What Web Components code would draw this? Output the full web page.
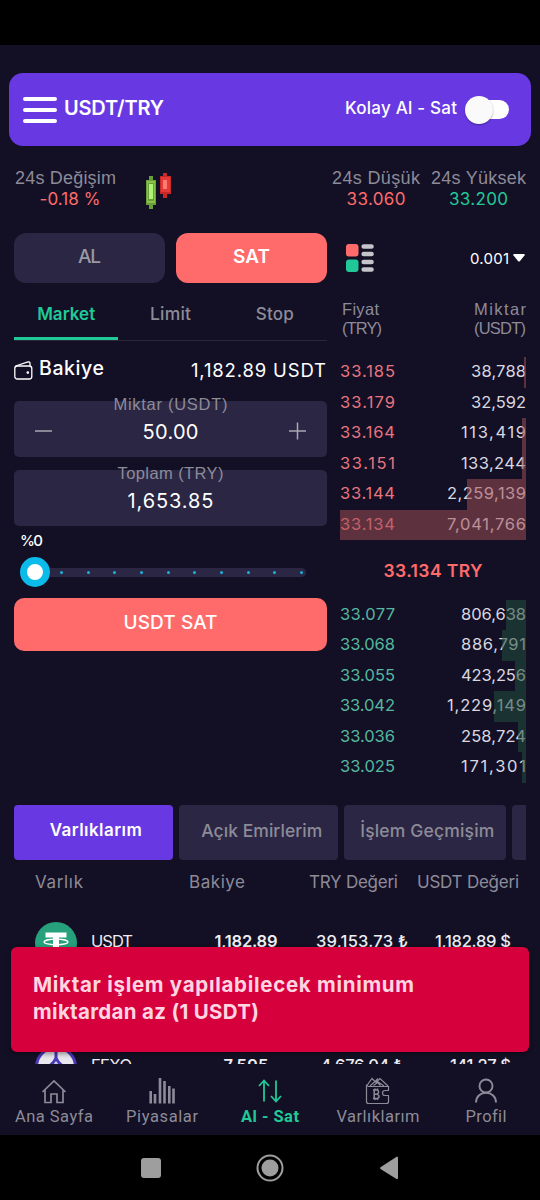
<!DOCTYPE html>
<html lang="tr">
<head>
<meta charset="utf-8">
<title>USDT/TRY</title>
<style>
  body {
    margin: 0;
    background: #000;
  }
</style>
</head>
<body>
<trade-app></trade-app>

<script>
// one line of text that is tracked out to the width given in "w"
class TextLabel extends HTMLElement {
  constructor() {
    super();
    this.attachShadow({ mode: 'open' });
  }
  connectedCallback() {
    const size = this.getAttribute('size') || 17;
    const weight = this.getAttribute('weight') || 400;
    this.shadowRoot.innerHTML = `
    <style>
    :host {
      display: block;
      flex: none;
      white-space: nowrap;
      font-size: ${size}px;
      font-weight: ${weight};
      line-height: 1;
    }
    :host([face="grotesk"]) { font-family: "Liberation Sans", Arial, sans-serif; }
    :host([face="nav"]) { font-family: Roboto, sans-serif; }
    span { display: inline-block; }
    </style>
    <span><slot></slot></span>
    `;
    this.fit();
  }
  fit() {
    const width = Number(this.getAttribute('w'));
    if (!width) return;
    const span = this.shadowRoot.querySelector('span');
    const natural = span.getBoundingClientRect().width;
    const gaps = this.textContent.length - 1;
    span.style.letterSpacing = `${(width - natural) / gaps}px`;
    this.style.width = `${width}px`;
  }
}
customElements.define('text-label', TextLabel);

class BaseElement extends HTMLElement {
  constructor() {
    super();
    this.attachShadow({ mode: 'open' });
  }
  connectedCallback() {
    const template = document.createElement('template');
    template.innerHTML = `<style>${this.getStyles()}</style>${this.getTemplate()}`;
    this.shadowRoot.appendChild(template.content.cloneNode(true));
  }
}

class AppHeader extends BaseElement {
  getTemplate() {
    return `
    <svg width="34" height="28" viewBox="0 0 34 28" stroke="#fff" stroke-width="4" stroke-linecap="round">
      <path d="M2 3h30M2 14h30M2 25h30"/>
    </svg>
    <text-label class="pair" size="20" weight="600" w="100">USDT/TRY</text-label>
    <text-label size="17" weight="500" w="112">Kolay Al - Sat</text-label>
    <div class="switch"><i></i></div>
    `;
  }
  getStyles() {
    return `
    :host {
      display: flex;
      align-items: center;
      height: 73px;
      margin: 0 9px;
      padding: 0 22px 0 14px;
      box-sizing: border-box;
      border-radius: 14px;
      background: #6839e3;
      color: #fff;
    }
    .pair { margin: 0 auto 3px 7px; }
    text-label { margin-bottom: 3px; }
    .switch {
      display: flex;
      align-items: center;
      width: 40px;
      height: 19px;
      margin-left: 12px;
      border-radius: 10px;
      background: #fff;
    }
    i {
      width: 28px;
      height: 28px;
      margin-left: -4px;
      border-radius: 50%;
      background: #fafafa;
      box-shadow: 0 1px 2px rgba(0, 0, 0, .35);
    }
    `;
  }
}
customElements.define('app-header', AppHeader);

class TickerStats extends BaseElement {
  getTemplate() {
    return `
    <div class="stat change">
      <text-label face="grotesk" size="18" w="101">24s Değişim</text-label>
      <text-label class="down" size="17" w="61">-0.18 %</text-label>
    </div>
    <svg width="28" height="38" viewBox="0 0 28 38" shape-rendering="crispEdges">
      <path fill="#689f38" d="M4 4h4v33H4zM1 8h10v25H1z"/>
      <path fill="#8bc34a" d="M2 9h8v22H2z"/>
      <path fill="#689f38" d="M3 11h6v18H3z"/>
      <path fill="#aef47a" d="M4 12h4v15H4z"/>
      <path fill="#c62828" d="M18 1h4v25h-4zM15 4h11v18H15z"/>
      <path fill="#e53935" d="M16 5h9v15h-9z"/>
      <path fill="#ff7b72" d="M18 8h4v9h-4z"/>
    </svg>
    <div class="stat">
      <text-label face="grotesk" size="18" w="88">24s Düşük</text-label>
      <text-label class="down" size="17" w="59">33.060</text-label>
    </div>
    <div class="stat">
      <text-label face="grotesk" size="18" w="95">24s Yüksek</text-label>
      <text-label class="up" size="17" w="59">33.200</text-label>
    </div>
    `;
  }
  getStyles() {
    return `
    :host {
      display: flex;
      gap: 11px;
      height: 64px;
      margin: 23px 14px 0 15px;
      color: #8d8b98;
    }
    .stat {
      display: flex;
      flex-direction: column;
      align-items: center;
      gap: 4px;
    }
    .change { width: 101px; }
    .change .down { margin-left: 9px; }
    svg { margin: 3px auto 0 18px; }
    .down { color: #ff6b6b; }
    .up { color: #20c997; }
    `;
  }
}
customElements.define('ticker-stats', TickerStats);

// input box whose caption sits across the top edge
class AmountField extends BaseElement {
  getTemplate() {
    return `
    <div class="caption"><slot name="caption"></slot></div>
    <div class="row">
      <slot name="before"></slot>
      <div class="value"><slot></slot></div>
      <slot name="after"></slot>
    </div>
    `;
  }
  getStyles() {
    return `
    :host {
      display: block;
      height: 56px;
      border-radius: 5px;
      background: #2a2643;
      color: #fff;
    }
    .caption {
      display: flex;
      justify-content: center;
      height: 16px;
      margin-top: -6px;
      padding-top: 1px;
      box-sizing: border-box;
      color: #8d8b98;
    }
    .row {
      display: flex;
      align-items: center;
      height: 40px;
      padding: 0 20px;
    }
    .value {
      display: flex;
      flex: 1;
      justify-content: center;
      padding-top: 1px;
    }
    `;
  }
}
customElements.define('amount-field', AmountField);

class PercentSlider extends BaseElement {
  getTemplate() {
    return `
    <div class="thumb"></div>
    <div class="track">${'<i></i>'.repeat(10)}</div>
    `;
  }
  getStyles() {
    return `
    :host {
      display: flex;
      align-items: center;
      height: 30px;
    }
    .thumb {
      flex: none;
      width: 16px;
      height: 16px;
      border: 7px solid #0bbbe9;
      border-radius: 50%;
      background: #fff;
    }
    .track {
      display: flex;
      align-items: center;
      justify-content: space-between;
      width: 256px;
      height: 9px;
      padding: 0 3px 0 10px;
      box-sizing: border-box;
      border-radius: 0 5px 5px 0;
      background: #2a2643;
    }
    i {
      width: 3px;
      height: 3px;
      border-radius: 50%;
      background: #19b2dc;
    }
    `;
  }
}
customElements.define('percent-slider', PercentSlider);

class OrderForm extends BaseElement {
  getTemplate() {
    return `
    <div class="sides">
      <div class="side"><text-label size="19" weight="500" w="23">AL</text-label></div>
      <div class="side sell"><text-label size="19" weight="600" w="37">SAT</text-label></div>
    </div>
    <div class="types">
      <div class="active"><text-label size="17" weight="600" w="58">Market</text-label></div>
      <div><text-label size="17.500" weight="500" w="41">Limit</text-label></div>
      <div><text-label size="17" weight="500" w="38">Stop</text-label></div>
    </div>
    <div class="balance">
      <svg width="19" height="19" viewBox="0 0 19 19" fill="none" stroke="#fff" stroke-width="1.3">
        <rect x=".8" y="5" width="17" height="13" rx="2.5"/>
        <path d="M1.5 5 14 1q2-.5 2 1.500V5"/>
        <circle cx="13.800" cy="11.600" r=".7" fill="#fff"/>
      </svg>
      <text-label class="name" size="19.500" weight="500" w="65">Bakiye</text-label>
      <text-label class="sum" size="18.500" w="135">1,182.89 USDT</text-label>
    </div>
    <amount-field>
      <text-label slot="caption" face="grotesk" size="16.500" w="114">Miktar (USDT)</text-label>
      <svg slot="before" width="18" height="18" viewBox="0 0 18 18" stroke="#a9a8b4" stroke-width="1.500"><path d="M1 9h17"/></svg>
      <text-label size="20" w="56">50.00</text-label>
      <svg slot="after" width="18" height="18" viewBox="0 0 18 18" stroke="#a9a8b4" stroke-width="1.500"><path d="M0 9h17M8.500 .5v17"/></svg>
    </amount-field>
    <amount-field>
      <text-label slot="caption" face="grotesk" size="16.500" w="106">Toplam (TRY)</text-label>
      <text-label size="20" w="86">1,653.85</text-label>
    </amount-field>
    <text-label class="percent" size="15" weight="500" w="23">%0</text-label>
    <percent-slider></percent-slider>
    <div class="submit"><text-label size="19" weight="500" w="94">USDT SAT</text-label></div>
    `;
  }
  getStyles() {
    return `
    :host {
      display: flex;
      flex-direction: column;
      width: 313px;
      color: #fff;
    }
    .sides {
      display: flex;
      gap: 11px;
    }
    .side {
      display: flex;
      flex: 1;
      align-items: center;
      justify-content: center;
      height: 50px;
      padding-bottom: 3px;
      box-sizing: border-box;
      border-radius: 12px;
      background: #2a2643;
      color: #9b99a3;
    }
    .sell {
      background: #ff6b6b;
      color: #fff;
    }
    .types {
      display: flex;
      height: 58px;
      box-sizing: border-box;
      border-bottom: 1px solid #2a2838;
      color: #8d8b98;
    }
    .types div {
      display: flex;
      flex: 1;
      align-items: center;
      justify-content: center;
      padding-top: 5px;
    }
    .types .active {
      padding-top: 8px;
      border-bottom: 3px solid #20c997;
      color: #20c997;
    }
    .balance {
      display: flex;
      align-items: center;
      height: 60px;
      padding-bottom: 1px;
      box-sizing: border-box;
    }
    .balance .name { margin: 0 auto 4px 6px; }
    .balance .sum { margin-right: 1px; }
    amount-field + amount-field { margin-top: 13px; }
    .percent { margin: 7px 0 9px 6px; }
    percent-slider { margin-left: 6px; }
    .submit {
      display: flex;
      align-items: center;
      justify-content: center;
      height: 53px;
      margin-top: 11px;
      padding-bottom: 4px;
      box-sizing: border-box;
      border-radius: 10px;
      background: #ff6b6b;
    }
    `;
  }
}
customElements.define('order-form', OrderForm);

class BookRow extends BaseElement {
  getTemplate() {
    return `
    <div class="texts">
      <text-label size="16.500" w="55">${this.getAttribute('price')}</text-label>
      <text-label class="amount" size="16.500" w="${this.getAttribute('w')}">${this.getAttribute('amount')}</text-label>
    </div>
    <div class="depth"></div>
    `;
  }
  getStyles() {
    return `
    :host {
      display: grid;
      height: 30.5px;
      color: #e7757f;
      --depth: rgba(160, 80, 85, .53);
    }
    :host([side="buy"]) {
      color: #55b79f;
      --depth: rgba(33, 78, 60, .55);
    }
    .texts {
      display: flex;
      grid-area: 1 / 1;
      align-items: center;
      justify-content: space-between;
      padding-bottom: 2px;
    }
    .amount { color: #d9d8e0; }
    .depth {
      grid-area: 1 / 1;
      justify-self: end;
      z-index: 1;
      width: ${this.getAttribute('depth')}px;
      background: var(--depth);
    }
    `;
  }
}
customElements.define('book-row', BookRow);

class OrderBook extends BaseElement {
  getTemplate() {
    const asks = [
      ['33.185', '38,788', 55, 2],
      ['33.179', '32,592', 55, 0],
      ['33.164', '113,419', 65, 4],
      ['33.151', '133,244', 65, 4],
      ['33.144', '2,259,139', 79, 59.5],
      ['33.134', '7,041,766', 79, 186]
    ];
    const bids = [
      ['33.077', '806,638', 65, 20.5],
      ['33.068', '886,791', 65, 24.5],
      ['33.055', '423,256', 65, 11.5],
      ['33.042', '1,229,149', 79, 32],
      ['33.036', '258,724', 65, 8],
      ['33.025', '171,301', 65, 4]
    ];
    const row = (side) => ([price, amount, w, depth]) =>
      `<book-row side="${side}" price="${price}" amount="${amount}" w="${w}" depth="${depth}"></book-row>`;
    return `
    <div class="tools">
      <svg width="28" height="28" viewBox="0 0 28 28">
        <rect width="12.500" height="12.500" rx="3" fill="#ff6b6b"/>
        <rect y="15.500" width="12.500" height="12.500" rx="3" fill="#20c997"/>
        <path stroke="#c6c4cb" stroke-width="4.600" stroke-linecap="round" d="M17.700 2.500h7.800M17.700 10h7.800M17.700 18h7.800M17.700 25.500h7.800"/>
      </svg>
      <text-label size="15" w="39">0.001</text-label>
      <svg class="caret" width="12" height="8" viewBox="0 0 12 8"><path fill="#fff" d="M1 0h10q1.200 .4.5 1.500L7 7q-1 1-2 0L.5 1.500Q-.2.4 1 0z"/></svg>
    </div>
    <div class="heads">
      <div>
        <text-label face="grotesk" size="16.500" w="37">Fiyat</text-label>
        <text-label face="grotesk" size="16.500" w="40">(TRY)</text-label>
      </div>
      <div>
        <text-label face="grotesk" size="16.500" w="52">Miktar</text-label>
        <text-label face="grotesk" size="16.500" w="52">(USDT)</text-label>
      </div>
    </div>
    ${asks.map(row('sell')).join('')}
    <div class="last"><text-label size="17.500" weight="600" w="99">33.134 TRY</text-label></div>
    ${bids.map(row('buy')).join('')}
    `;
  }
  getStyles() {
    return `
    :host {
      display: block;
      flex: 1;
      color: #8d8b98;
    }
    .tools {
      display: flex;
      align-items: center;
      height: 50px;
      padding: 0 1px 0 6px;
      color: #fff;
    }
    .tools text-label { margin: 0 4px 0 auto; }
    .heads {
      display: flex;
      justify-content: space-between;
      height: 74px;
      padding: 18px 0 0 2px;
      box-sizing: border-box;
    }
    .heads div {
      display: flex;
      flex-direction: column;
      gap: 2.5px;
    }
    .last {
      display: flex;
      align-items: center;
      justify-content: center;
      height: 59.5px;
      padding-top: 1px;
      box-sizing: border-box;
      color: #ff6b6b;
    }
    `;
  }
}
customElements.define('order-book', OrderBook);

class AssetsPanel extends BaseElement {
  getTemplate() {
    return `
    <div class="tabs">
      <div class="tab active"><text-label size="17" weight="600" w="92">Varlıklarım</text-label></div>
      <div class="tab orders"><text-label size="17.500" weight="500" w="121">Açık Emirlerim</text-label></div>
      <div class="tab history"><text-label size="17.500" weight="500" w="134">İşlem Geçmişim</text-label></div>
      <div class="tab"></div>
    </div>
    <div class="heads">
      <text-label size="17" w="48">Varlık</text-label>
      <text-label size="17" w="56">Bakiye</text-label>
      <text-label size="17" w="89">TRY Değeri</text-label>
      <text-label size="17" w="102">USDT Değeri</text-label>
    </div>
    <div class="row">
      <svg width="42" height="42" viewBox="0 0 42 42">
        <circle cx="21" cy="21" r="21" fill="#26a17b"/>
        <path fill="#fff" d="M10.500 10.500h21v5H24V33h-6V15.500h-7.500z"/>
        <ellipse cx="21" cy="20" rx="12" ry="2.800" fill="none" stroke="#fff" stroke-width="1.300"/>
      </svg>
      <text-label size="16.500" w="42">USDT</text-label>
      <text-label size="16.500" weight="600" w="63">1,182.89</text-label>
      <text-label size="16.500" weight="500" w="92">39,153.73 ₺</text-label>
      <text-label size="16.500" weight="500" w="76">1,182.89 $</text-label>
    </div>
    <div class="row">
      <svg width="42" height="42" viewBox="0 0 42 42">
        <circle cx="21" cy="21" r="19.500" fill="#e9e8ef" stroke="#4b39b8" stroke-width="3"/>
        <path fill="none" stroke="#4b39b8" stroke-width="3" d="M21 2v11M21 12q-2 5-8 9M21 12q2 5 8 9"/>
        <circle cx="21" cy="20" r="2.500" fill="#4b8fdc"/>
      </svg>
      <text-label size="16.500" w="41">FEXO</text-label>
      <text-label size="16.500" weight="600" w="45">7,595</text-label>
      <text-label size="16.500" weight="500" w="83">4,676.04 ₺</text-label>
      <text-label size="16.500" weight="500" w="61">141.27 $</text-label>
    </div>
    `;
  }
  getStyles() {
    return `
    :host {
      display: block;
      height: 259px;
      margin-top: 21.5px;
      overflow: hidden;
      color: #eeedf3;
    }
    .tabs {
      display: flex;
      gap: 6.5px;
      width: 512px;
      margin-left: 14px;
      overflow: hidden;
    }
    .tab {
      display: flex;
      flex: none;
      align-items: center;
      justify-content: center;
      width: 158.5px;
      height: 55px;
      padding-bottom: 3px;
      box-sizing: border-box;
      border-radius: 4px;
      background: #2a2643;
      color: #8d8b98;
    }
    .active {
      padding-left: 5px;
      background: #6839e3;
      color: #fff;
    }
    .orders { padding-left: 7px; }
    .history {
      width: 161.5px;
      padding-left: 5px;
    }
    .heads {
      display: grid;
      grid-template-columns: 154px 120px 108px 1fr;
      align-items: center;
      height: 45px;
      margin-bottom: 17px;
      padding-left: 35px;
      color: #8d8b98;
    }
    .row {
      display: grid;
      grid-template-columns: 56px 105px 100px 132px 83px;
      align-items: center;
      height: 42px;
      margin-bottom: 82px;
      padding-left: 35px;
    }
    .row text-label { margin-bottom: 2px; }
    .row text-label:nth-of-type(2),
    .row text-label:nth-of-type(3) { justify-self: center; }
    .row text-label:nth-of-type(4) { justify-self: end; }
    `;
  }
}
customElements.define('assets-panel', AssetsPanel);

class ToastMessage extends BaseElement {
  getTemplate() {
    return `<slot></slot>`;
  }
  getStyles() {
    return `
    :host {
      position: absolute;
      left: 11px;
      top: 947px;
      z-index: 2;
      display: flex;
      flex-direction: column;
      gap: 7px;
      width: 518px;
      height: 105px;
      padding: 27.5px 22px;
      box-sizing: border-box;
      border-radius: 6px;
      background: #d6003c;
      color: #ffd5e1;
      box-shadow: 0 2px 5px rgba(0, 0, 0, .4);
    }
    `;
  }
}
customElements.define('toast-message', ToastMessage);

class TabItem extends BaseElement {
  getTemplate() {
    return `<slot name="icon"></slot><slot></slot>`;
  }
  getStyles() {
    return `
    :host {
      display: flex;
      flex: 1;
      flex-direction: column;
      align-items: center;
      gap: 4px;
      padding-top: 13px;
      color: #8d8b98;
    }
    :host([active]) { color: #20c997; }
    `;
  }
}
customElements.define('tab-item', TabItem);

class BottomTabs extends BaseElement {
  getTemplate() {
    return `
    <tab-item>
      <svg slot="icon" width="28" height="28" viewBox="0 0 28 28"><path d="M2.500 15 14 4l11.500 11M5 13v12.500h6V17h6v8.500h6V13"/></svg>
      <text-label face="nav" size="16.500" w="78">Ana Sayfa</text-label>
    </tab-item>
    <tab-item>
      <svg slot="icon" width="28" height="28" viewBox="0 0 28 28"><path stroke-width="2.600" d="M2.700 14v12.500M7 17v9.500M12 1v25.500M16.500 4v22.500M21.300 9v17.500M25.500 11.500v15"/></svg>
      <text-label face="nav" size="16.500" w="72">Piyasalar</text-label>
    </tab-item>
    <tab-item active>
      <svg slot="icon" width="28" height="28" viewBox="0 0 28 28"><path stroke-width="1.800" d="M8 24.500V4M3 9l5-5.500L13 9M20 3.500V24M15 19l5 5.500L25 19"/></svg>
      <text-label face="nav" size="16.500" weight="700" w="58">Al - Sat</text-label>
    </tab-item>
    <tab-item>
      <svg slot="icon" width="28" height="28" viewBox="0 0 28 28"><g stroke-width="1.200"><path d="M24.500 13V9.500H4.500q-2-.2-2-2M2.500 8v16.500q0 2 2 2h18q2 0 2-2V19M25 13.500h-4a2.300 2.300 0 0 0 0 5h4M3 8.500l5-7 4 4 4-4 8 7.500M6 9l6-5.500L20 9M9.500 8.500l4-3 3 3M12 3.500l2-2"/><path stroke-width="1.500" d="M9 13h4.500q2.500 2-.5 4.200H10M13 17.200q4 2 .5 4.300H9M10.200 13v8.500M11 11.500V13M13.500 11.500V13M11 21.500V23M13.500 21.500V23"/></g></svg>
      <text-label face="nav" size="16.500" w="83">Varlıklarım</text-label>
    </tab-item>
    <tab-item>
      <svg slot="icon" width="28" height="28" viewBox="0 0 28 28"><g stroke-width="1.900"><circle cx="14" cy="9" r="6.500"/><path d="M4 25.500C4 12.500 24 12.500 24 25.500"/></g></svg>
      <text-label face="nav" size="16.500" w="41">Profil</text-label>
    </tab-item>
    `;
  }
  getStyles() {
    return `
    :host {
      display: flex;
      height: 71px;
    }
    svg {
      fill: none;
      stroke: currentColor;
      stroke-width: 1.7;
    }
    `;
  }
}
customElements.define('bottom-tabs', BottomTabs);

class SystemKeys extends BaseElement {
  getTemplate() {
    return `
    <svg width="28" height="28" viewBox="0 0 28 28"><rect x="4" y="4" width="20" height="20" rx="3" fill="#9e9e9e"/></svg>
    <svg width="28" height="28" viewBox="0 0 28 28">
      <circle cx="14" cy="14" r="12.500" fill="none" stroke="#9e9e9e" stroke-width="2"/>
      <circle cx="14" cy="14" r="8.500" fill="#9e9e9e"/>
    </svg>
    <svg width="28" height="28" viewBox="0 0 28 28"><path fill="#9e9e9e" d="M22 2.500Q23 2.500 23 4v20q0 1.500-1.500 1L5.500 15q-1-1 0-1.800z"/></svg>
    `;
  }
  getStyles() {
    return `
    :host {
      display: flex;
      align-items: center;
      justify-content: center;
      gap: 91px;
      height: 65px;
      background: #000;
    }
    `;
  }
}
customElements.define('system-keys', SystemKeys);

class TradeApp extends BaseElement {
  getTemplate() {
    return `
    <div class="screen">
      <app-header></app-header>
      <ticker-stats></ticker-stats>
      <main>
        <order-form></order-form>
        <order-book></order-book>
      </main>
      <assets-panel></assets-panel>
      <bottom-tabs></bottom-tabs>
    </div>
    <system-keys></system-keys>
    <toast-message>
      <text-label size="20.500" weight="700" w="381">Miktar işlem yapılabilecek minimum</text-label>
      <text-label size="20.500" weight="700" w="226">miktardan az (1 USDT)</text-label>
    </toast-message>
    `;
  }
  getStyles() {
    return `
    :host {
      display: block;
      width: 540px;
      height: 1200px;
      overflow: hidden;
      font-family: Inter, "Noto Sans", sans-serif;
    }
    .screen {
      height: 1090px;
      margin-top: 45px;
      padding-top: 28px;
      box-sizing: border-box;
      background: #131025;
    }
    main {
      display: flex;
      gap: 13px;
      height: 550px;
      padding: 0 14px;
    }
    `;
  }
}
customElements.define('trade-app', TradeApp);
</script>
</body>
</html>
